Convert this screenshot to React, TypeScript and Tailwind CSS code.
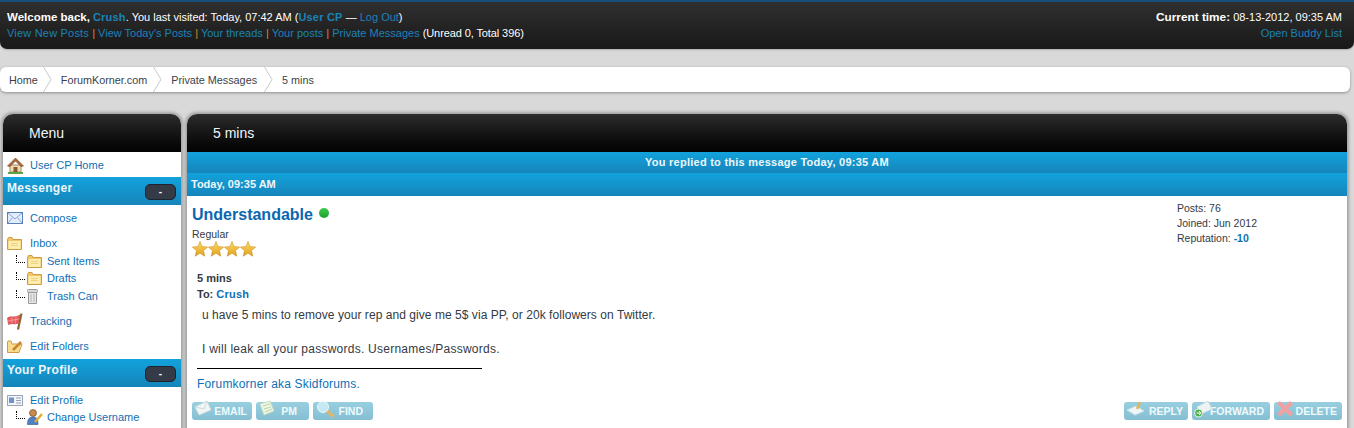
import React from 'react';

const Sep = () => <span className="text-[#d98a2b]"> | </span>;

const Crumb = ({ label, last, className = 'pr-[16px]' }: { label: string; last?: boolean; className?: string }) => (
  <div className={`relative flex h-full items-center pl-[9px] pt-[1px] text-[#3a3f4a] ${className}`}>
    {label}
    {!last && (
      <svg className="absolute right-0 top-0 h-[25px] w-[9px]" viewBox="0 0 9 25" fill="none">
        <path d="M0.5 0 L8 12.5 L0.5 25" stroke="#c9c9c9" />
      </svg>
    )}
  </div>
);

const Folder = () => (
  <svg width="15" height="13" viewBox="0 0 15 13">
    <path d="M0.5 2.5 L0.5 12.5 L14.5 12.5 L14.5 2.5 L6 2.5 L5 0.5 L1.5 0.5 Z" fill="#f3c765" stroke="#d19a45" />
    <rect x="1.5" y="4" width="12" height="8" fill="#fdeeb0" />
    <path d="M4 6.5 H11 M4 8.5 H11" stroke="#f0d27e" />
  </svg>
);

const Home = () => (
  <svg width="17" height="17" viewBox="0 0 17 17">
    <path d="M3 8 H14 V15 H3 Z" fill="#efdcb6" stroke="#a58a64" />
    <path d="M0.5 9 L8.5 1 L16.5 9 L14 9.5 L8.5 4 L3 9.5 Z" fill="#a8683d" stroke="#7a4a2a" strokeWidth="0.6" />
    <rect x="6.5" y="10" width="4" height="5" fill="#8a5a33" />
    <path d="M1 16 H16" stroke="#5ea34a" strokeWidth="2" />
  </svg>
);

const Mail = () => (
  <svg width="16" height="12" viewBox="0 0 16 12">
    <rect x="0.5" y="0.5" width="15" height="11" fill="#e2ecfa" stroke="#5b80bd" />
    <path d="M1 1 L8 7 L15 1 M1 11 L5.5 5.5 M15 11 L10.5 5.5" fill="none" stroke="#8aa8d6" />
  </svg>
);

const Trash = () => (
  <svg width="11" height="15" viewBox="0 0 11 15">
    <rect x="0.5" y="0.5" width="10" height="3" rx="1" fill="#d9d9d9" stroke="#9a9a9a" />
    <path d="M1.5 3.5 H9.5 V14.5 H1.5 Z" fill="#e6e6e6" stroke="#9a9a9a" />
    <path d="M4 5 V13 M7 5 V13" stroke="#b5b5b5" />
  </svg>
);

const Flag = () => (
  <svg width="16" height="17" viewBox="0 0 16 17">
    <path d="M14.5 0.5 L11 16.5" stroke="#8a6a35" strokeWidth="2.2" />
    <path d="M0.5 5 C4 2.5 8 5.5 13 2 L11.5 10 C7 12 4.5 9.5 1.5 11.5 Z" fill="#ec5a5c" stroke="#bb3a3d" strokeWidth="0.6" />
    <path d="M5 4 L5 10 M9 4 L8.5 10 M1 8 L12 6" stroke="#f6a3a3" strokeWidth="0.8" />
  </svg>
);

const EditFolder = () => (
  <svg width="16" height="13" viewBox="0 0 16 13">
    <path d="M0.5 2 L0.5 12.5 L12 12.5 L15 4 L5 4 L4 1 L1 1 Z" fill="#f8dd8e" stroke="#d19a45" />
    <path d="M6 10 L14 2" stroke="#c9842d" strokeWidth="2.5" />
  </svg>
);

const Card = () => (
  <svg width="16" height="11" viewBox="0 0 16 11">
    <rect x="0.5" y="0.5" width="15" height="10" fill="#f2f4f8" stroke="#9aa5b8" />
    <rect x="2" y="2.5" width="5" height="5.5" fill="#6f92c9" />
    <path d="M9 3 H14 M9 5.5 H14 M9 8 H14" stroke="#9aa5b8" />
  </svg>
);

const Person = () => (
  <svg width="16" height="16" viewBox="0 0 16 16">
    <circle cx="6" cy="4" r="3.5" fill="#c98a4a" stroke="#6b4020" strokeWidth="0.6" />
    <path d="M0.5 15.5 C0.5 9 3 8 6 8 C9 8 11 9 11 15.5 Z" fill="#4f80c4" stroke="#2f5890" strokeWidth="0.6" />
    <path d="M8 13 L15 5" stroke="#e2ac2f" strokeWidth="2.4" />
  </svg>
);

const Tree = () => (
  <span className="mb-[5px] ml-[13px] mr-[2px] h-[8px] w-[9px] shrink-0 border-b border-l border-dotted border-black" />
);

const MenuRow = ({ icon, label, className = '' }: { icon: React.ReactNode; label: string; className?: string }) => (
  <div className={`flex items-center pl-[4px] ${className}`}>
    <span className="flex w-[23px] shrink-0 items-center">{icon}</span>
    <span className="text-[#0f6fb5]">{label}</span>
  </div>
);

const SubRow = ({ icon, label }: { icon: React.ReactNode; label: string }) => (
  <div className="flex h-[18px] items-center">
    <Tree />
    <span className="flex w-[20px] shrink-0 items-center">{icon}</span>
    <span className="text-[#0f6fb5]">{label}</span>
  </div>
);

const SectionHead = ({ label }: { label: string }) => (
  <div className="flex h-[28px] justify-between bg-gradient-to-b from-[#12a2dc] to-[#1585ba] pl-[4px] pr-[5px] pt-[4px]">
    <span className="text-[12px] font-bold tracking-[0.3px] text-[#eef6fb]">{label}</span>
    <span className="mt-[3px] flex h-[16px] w-[31px] items-center justify-center rounded-[5px] border border-[#1d2430] bg-[#343b47] text-[10px] font-bold leading-none text-white">
      -
    </span>
  </div>
);

const PanelHead = ({ label, className }: { label: string; className: string }) => (
  <div className={`flex h-[38px] items-center rounded-t-[10px] bg-gradient-to-b from-[#2d2d2d] to-[#030303] text-[14px] text-[#f2f6fa] ${className}`}>
    {label}
  </div>
);

const ActionButton = ({ icon, label, className }: { icon: React.ReactNode; label: string; className: string }) => (
  <div className={`relative flex h-[18px] items-center justify-end rounded-[3px] bg-gradient-to-b from-[#98cfe0] to-[#84bfd2] text-[10.5px] font-bold text-[#eefafc] ${className}`}>
    <span className="absolute left-[2px] top-[-2px]">{icon}</span>
    {label}
  </div>
);

const MailBtn = () => (
  <svg width="18" height="17" viewBox="0 0 18 17">
    <path d="M1 7 L13 1 L17 10 L5 15 Z" fill="#f2f5f5" stroke="#cfdcdf" />
    <path d="M1 7 L10 9 L13 1" fill="none" stroke="#cfdcdf" />
  </svg>
);

const NoteBtn = () => (
  <svg width="18" height="17" viewBox="0 0 18 17">
    <path d="M2 4 L12 1 L16 11 L6 15 Z" fill="#eef6e4" stroke="#c5dcc0" />
    <path d="M5 6 L12 4 M6 9 L13 7 M7 12 L14 9" stroke="#b5d4a8" />
  </svg>
);

const FindBtn = () => (
  <svg width="20" height="18" viewBox="0 0 20 18">
    <path d="M12 11 L18.5 16.5" stroke="#e3b565" strokeWidth="3" />
    <circle cx="8" cy="7" r="5.5" fill="#c4e8f4" stroke="#eef6f8" />
  </svg>
);

const ReplyBtn = () => (
  <svg width="20" height="17" viewBox="0 0 20 17">
    <path d="M1 10 L10 6 L18 11 L9 15 Z" fill="#eef6f8" stroke="#cfe0e4" />
    <path d="M11 9 L14 2" stroke="#e0b55a" strokeWidth="2.4" />
  </svg>
);

const ForwardBtn = () => (
  <svg width="19" height="18" viewBox="0 0 19 18">
    <path d="M3 7 L14 1 L18 9 L7 14 Z" fill="#eef3f3" stroke="#cfdcdf" />
    <circle cx="4.5" cy="13" r="4" fill="#4fae4a" stroke="#eaf5ea" />
    <path d="M2.5 13 H6.5 M5 11 L6.8 13 L5 15" stroke="#fff" fill="none" />
  </svg>
);

const DeleteBtn = () => (
  <svg width="18" height="17" viewBox="0 0 18 17">
    <path d="M2.5 2.5 L15.5 15 M15.5 2.5 L2.5 15" stroke="#f3a0a0" strokeWidth="4" />
  </svg>
);

const Star = () => (
  <svg width="16" height="16" viewBox="0 0 16 16">
    <defs>
      <linearGradient id="starFill" x1="0" y1="0" x2="0" y2="1">
        <stop offset="0" stopColor="#ffdf6b" />
        <stop offset="1" stopColor="#e09d1b" />
      </linearGradient>
    </defs>
    <path d="M8 0.5 L10.2 5.6 L15.6 6.1 L11.5 9.7 L12.8 15.2 L8 12.3 L3.2 15.2 L4.5 9.7 L0.4 6.1 L5.8 5.6 Z" fill="url(#starFill)" stroke="#c9952f" strokeWidth="0.6" />
  </svg>
);

export default function App() {
  return (
    <div className="h-screen overflow-hidden bg-[#d9d9d9] font-['Liberation_Sans',Arial,sans-serif] text-[11px] leading-[15px]">
      {/* Top bar */}
      <div className="flex h-[49px] justify-between rounded-b-[7px] border-t-2 border-[#15507c] bg-gradient-to-b from-[#303030] to-[#181818] pl-[7px] pr-[12px] pt-[8px] text-white shadow-[0_1px_2px_rgba(0,0,0,0.2)]">
        <div>
          <div>
            <b className="text-[11.5px]">Welcome back,</b> <b className="font-bold tracking-[0.2px] text-[#1b82b8]">Crush</b>. You last visited: Today, 07:42 AM (
            <b className="font-bold tracking-[0.2px] text-[#1b82b8]">User CP</b> — <span className="text-[#1b82b8]">Log Out</span>)
          </div>
          <div className="mt-[1px]">
            <span className="tracking-[0.2px] text-[#1b82b8]">View New Posts</span>
            <Sep />
            <span className="text-[#1b82b8]">View Today's Posts</span>
            <Sep />
            <span className="text-[#1b82b8]">Your threads</span>
            <Sep />
            <span className="text-[#1b82b8]">Your posts</span>
            <Sep />
            <span className="text-[#1b82b8]">Private Messages</span> <span className="tracking-[-0.1px]">(Unread 0, Total 396)</span>
          </div>
        </div>
        <div className="text-right">
          <div>
            <b className="text-[11.8px]">Current time:</b> 08-13-2012, 09:35 AM
          </div>
          <div className="mt-[1px] text-[#1b82b8]">Open Buddy List</div>
        </div>
      </div>

      {/* Breadcrumb */}
      <div className="mr-[4px] mt-[18px] flex h-[25px] rounded-[6px] bg-white text-[10.8px] shadow-[0_1px_3px_rgba(0,0,0,0.35)]">
        <Crumb label="Home" className="pr-[14px]" />
        <Crumb label="ForumKorner.com" className="pr-[15px]" />
        <Crumb label="Private Messages" />
        <Crumb label="5 mins" last />
      </div>

      <div className="mt-[22px] flex h-[340px] gap-[6px] pl-[3px] pr-[7px]">
        {/* Sidebar */}
        <div className="w-[178px] shrink-0 rounded-t-[10px] bg-white shadow-[0_0_3px_2px_rgba(0,0,0,0.25)]">
          <PanelHead label="Menu" className="pl-[26px]" />
          <MenuRow icon={<Home />} label="User CP Home" className="h-[26px] pt-[1px]" />
          <div className="-mt-[1px]">
            <SectionHead label="Messenger" />
          </div>
          <MenuRow icon={<Mail />} label="Compose" className="mt-[4px] h-[18px]" />
          <MenuRow icon={<Folder />} label="Inbox" className="mt-[7px] h-[18px]" />
          <SubRow icon={<Folder />} label="Sent Items" />
          <div className="-mt-[1px]">
            <SubRow icon={<Folder />} label="Drafts" />
          </div>
          <SubRow icon={<Trash />} label="Trash Can" />
          <MenuRow icon={<Flag />} label="Tracking" className="mt-[7px] h-[18px]" />
          <MenuRow icon={<EditFolder />} label="Edit Folders" className="mt-[7px] h-[18px]" />
          <div className="mt-[4px]">
            <SectionHead label="Your Profile" />
          </div>
          <MenuRow icon={<Card />} label="Edit Profile" className="mt-[4px] h-[18px]" />
          <div className="-mt-[1px]">
            <SubRow icon={<Person />} label="Change Username" />
          </div>
        </div>

        {/* Message panel */}
        <div className="flex-1 rounded-t-[10px] bg-white shadow-[0_0_3px_2px_rgba(0,0,0,0.25)]">
          <PanelHead label="5 mins" className="pl-[26px]" />
          <div className="flex h-[21px] items-center justify-center bg-gradient-to-b from-[#12a2dc] to-[#1585ba] font-bold tracking-[0.25px] text-[#eef6fb]">
            You replied to this message Today, 09:35 AM
          </div>
          <div className="flex h-[23px] items-center bg-gradient-to-b from-[#12a2dc] to-[#1585ba] pl-[4px] font-bold text-[#eef6fb]">
            Today, 09:35 AM
          </div>

          <div className="px-[5px] pt-[9px] text-[#333a44]">
            <div className="flex justify-between">
              <div>
                <div className="flex h-[19px] items-start">
                  <span className="text-[16px] font-bold leading-[19px] text-[#0b66b0]">Understandable</span>
                  <span className="ml-[6px] mt-[3px] h-[10px] w-[10px] rounded-full bg-gradient-to-b from-[#3fc94f] to-[#17a02e]" />
                </div>
                <div className="mt-[4px] text-[10.5px] leading-[13px]">Regular</div>
                <div className="flex h-[17px]">
                  <Star />
                  <Star />
                  <Star />
                  <Star />
                </div>
              </div>
              <div className="-mt-[4px] w-[165px] text-[10.5px]">
                <div>Posts: 76</div>
                <div>Joined: Jun 2012</div>
                <div>
                  Reputation: <b className="text-[#0f6fb5]">-10</b>
                </div>
              </div>
            </div>

            <div className="pl-[5px]">
              <div className="mt-[12px] font-bold leading-[16px]">5 mins</div>
              <div className="font-bold leading-[17px]">
                To: <span className="tracking-[0.2px] text-[#0f6fb5]">Crush</span>
              </div>
              <div className="pl-[5px] pt-[4px] text-[12px] leading-[16px]">
                <div className="tracking-[0.05px]">u have 5 mins to remove your rep and give me 5$ via PP, or 20k followers on Twitter.</div>
                <div className="mt-[18px] tracking-[0.25px]">I will leak all your passwords. Usernames/Passwords.</div>
              </div>
              <div className="mt-[11px] h-px w-[285px] bg-black" />
              <div className="mt-[8px] text-[12px] leading-[15px] tracking-[0.18px] text-[#0f6fb5]">Forumkorner aka Skidforums.</div>
            </div>

            <div className="mt-[10px] flex justify-between">
              <div className="flex gap-[4px]">
                <ActionButton icon={<MailBtn />} label="EMAIL" className="w-[60px] pr-[5px]" />
                <ActionButton icon={<NoteBtn />} label="PM" className="w-[53px] pr-[12px]" />
                <ActionButton icon={<FindBtn />} label="FIND" className="w-[60px] pr-[10px]" />
              </div>
              <div className="flex gap-[4px]">
                <ActionButton icon={<ReplyBtn />} label="REPLY" className="w-[64px] pr-[5px]" />
                <ActionButton icon={<ForwardBtn />} label="FORWARD" className="w-[78px] pr-[6px]" />
                <ActionButton icon={<DeleteBtn />} label="DELETE" className="w-[68px] pr-[5px]" />
              </div>
            </div>
          </div>
        </div>
      </div>
    </div>
  );
}
